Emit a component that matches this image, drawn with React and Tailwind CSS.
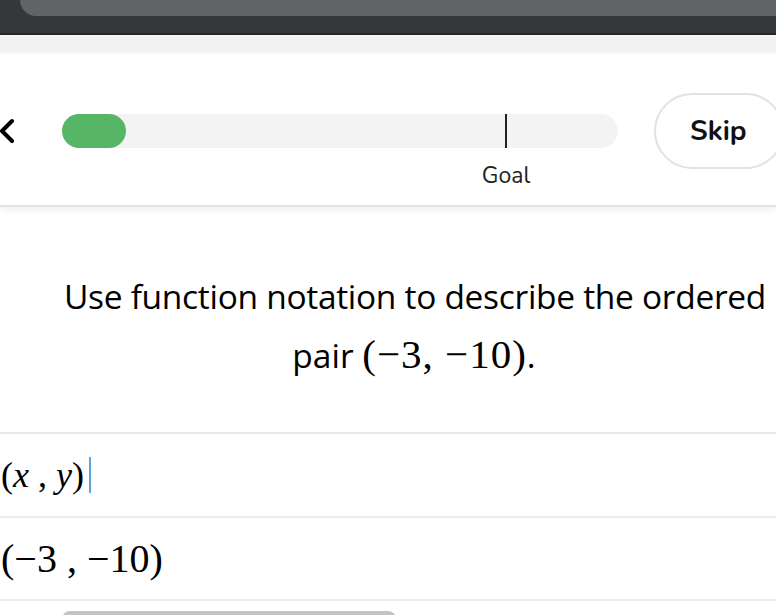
import { ChevronLeft } from 'lucide-react';

const sans = { fontFamily: '"Nunito", "Lato", "Noto Sans", sans-serif' };
const serif = { fontFamily: '"Liberation Serif", "DejaVu Serif", serif' };

export default function App() {
  return (
    <div className="w-[776px] h-[615px] overflow-hidden bg-white relative" style={sans}>
      {/* device top chrome */}
      <div className="h-[33px] bg-[#34383b]">
        <div className="ml-[20px] h-[16px] bg-[#606467] rounded-bl-[18px]" />
      </div>
      <div className="h-[2px] bg-[#26292b]" />
      <div className="h-[17px] bg-gradient-to-b from-[#f4f4f4] to-[#f1f1f1] shadow-[0_2px_3px_rgba(0,0,0,0.04)]" />

      {/* header */}
      <div className="h-[155px] border-b-2 border-[#e3e3e3] shadow-[0_4px_6px_rgba(0,0,0,0.05)] flex items-start">
        <div className="mt-[58px] -ml-[13px] w-[40px] flex shrink-0">
          <ChevronLeft className="text-black" strokeWidth={2.4} size={42} />
        </div>
        <div className="ml-[35px] mt-[62px] w-[556px] relative shrink-0">
          <div className="h-[34px] rounded-full bg-[#f3f3f3] flex">
            <div className="w-[64px] h-[34px] rounded-full bg-[#56b666]" />
          </div>
          <div className="absolute left-[443px] top-0 w-[2px] h-[34px] bg-[#222]" />
          <div className="absolute left-[444px] top-[48px] -translate-x-1/2 text-[23px] leading-[28px] text-[#222]">Goal</div>
        </div>
        <div className="ml-[36px] mt-[41px] w-[130px] h-[76px] rounded-full border-2 border-[#e2e2e2] flex items-center pl-[34px] shrink-0">
          <span className="text-[28px] font-bold text-[#111]">Skip</span>
        </div>
      </div>

      {/* question */}
      <div className="pt-[60px] text-center text-[33.5px] leading-[58px] text-black" style={{ fontFamily: '"Open Sans", "Noto Sans", sans-serif' }}>
        <div className="tracking-[-0.3px] pl-[54px] whitespace-nowrap">Use function notation to describe the ordered</div>
        <div className="pl-[52px]">
          pair{' '}
          <span className="text-[41px] tracking-[1px]" style={serif}>
            (−3, −10)
          </span>.
        </div>
      </div>

      {/* answers */}
      <div className="mt-[48px] border-t-2 border-[#e8e8e8]">
        <div className="h-[84px] flex items-center pl-[1px] border-b-2 border-[#ececec]" style={serif}>
          <span className="text-[36px] text-black">(<i>x</i> , <i>y</i>)</span>
          <span className="ml-[5px] w-[2px] h-[36px] bg-[#5aa7e0]" />
        </div>
        <div className="h-[83px] flex items-center pl-[1px] border-b-2 border-[#ececec]" style={serif}>
          <span className="text-[40px] text-black">(−3 , −10)</span>
        </div>
      </div>
      <div className="mt-[10px] ml-[62px] w-[334px] h-[8px] rounded-t-full bg-[#c4c4c4]" />
    </div>
  );
}
